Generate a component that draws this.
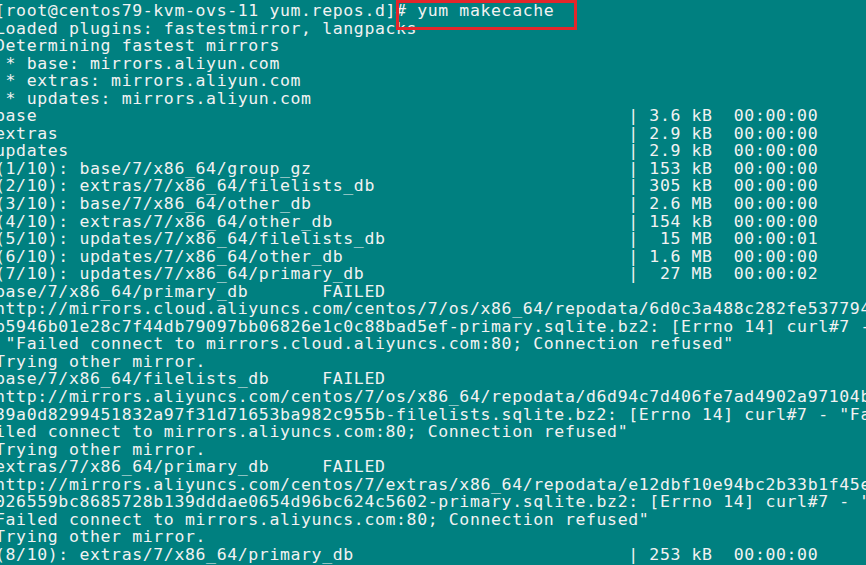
const lines: string[] = [
  "[root@centos79-kvm-ovs-11 yum.repos.d]# yum makecache",
  "Loaded plugins: fastestmirror, langpacks",
  "Determining fastest mirrors",
  " * base: mirrors.aliyun.com",
  " * extras: mirrors.aliyun.com",
  " * updates: mirrors.aliyun.com",
  "base                                                        | 3.6 kB  00:00:00",
  "extras                                                      | 2.9 kB  00:00:00",
  "updates                                                     | 2.9 kB  00:00:00",
  "(1/10): base/7/x86_64/group_gz                              | 153 kB  00:00:00",
  "(2/10): extras/7/x86_64/filelists_db                        | 305 kB  00:00:00",
  "(3/10): base/7/x86_64/other_db                              | 2.6 MB  00:00:00",
  "(4/10): extras/7/x86_64/other_db                            | 154 kB  00:00:00",
  "(5/10): updates/7/x86_64/filelists_db                       |  15 MB  00:00:01",
  "(6/10): updates/7/x86_64/other_db                           | 1.6 MB  00:00:00",
  "(7/10): updates/7/x86_64/primary_db                         |  27 MB  00:00:02",
  "base/7/x86_64/primary_db       FAILED",
  "http://mirrors.cloud.aliyuncs.com/centos/7/os/x86_64/repodata/6d0c3a488c282fe537794",
  "b5946b01e28c7f44db79097bb06826e1c0c88bad5ef-primary.sqlite.bz2: [Errno 14] curl#7 -",
  ' "Failed connect to mirrors.cloud.aliyuncs.com:80; Connection refused"',
  "Trying other mirror.",
  "base/7/x86_64/filelists_db     FAILED",
  "http://mirrors.aliyuncs.com/centos/7/os/x86_64/repodata/d6d94c7d406fe7ad4902a97104b",
  '39a0d8299451832a97f31d71653ba982c955b-filelists.sqlite.bz2: [Errno 14] curl#7 - "Fa',
  'iled connect to mirrors.aliyuncs.com:80; Connection refused"',
  "Trying other mirror.",
  "extras/7/x86_64/primary_db     FAILED",
  "http://mirrors.aliyuncs.com/centos/7/extras/x86_64/repodata/e12dbf10e94bc2b33b1f45e",
  '026559bc8685728b139dddae0654d96bc624c5602-primary.sqlite.bz2: [Errno 14] curl#7 - "',
  'Failed connect to mirrors.aliyuncs.com:80; Connection refused"',
  "Trying other mirror.",
  "(8/10): extras/7/x86_64/primary_db                          | 253 kB  00:00:00",
  "(9/10): base/7/x86_64/primary_db                            | 6.1 MB  00:00:01",
];

export default function App() {
  return (
    <div className="relative w-[866px] h-[565px] overflow-hidden bg-[#008080]">
      <div className="-ml-[5px] pt-[2px] font-['DejaVu_Sans_Mono',monospace] text-[16.5px] tracking-[0.62px] leading-[17.55px] text-[#f2f2f2] whitespace-pre">
        {lines.map((l, i) => (
          <div key={i} className="h-[17.55px]">
            {l}
          </div>
        ))}
      </div>

      {/* highlight round the command */}
      <div className="absolute left-[396px] top-0 w-[181px] h-[30px] border-[3px] border-[#e3262b]" />
    </div>
  );
}
